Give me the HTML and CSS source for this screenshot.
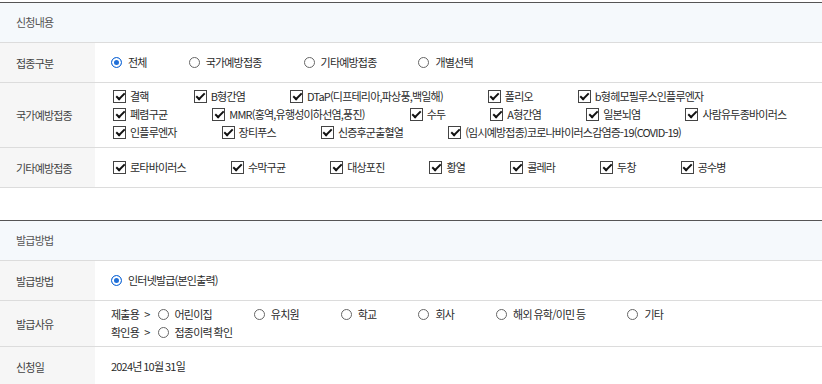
FILE: index.html
```html
<!DOCTYPE html>
<html lang="ko">
<head>
  <meta charset="UTF-8">
  <meta name="viewport" content="width=device-width, initial-scale=1.0">
  <title>예방접종증명서 신청</title>
  <link rel="stylesheet" href="styles.css">
</head>
<body>
  <div class="form-section">
    <div class="section-head">신청내용</div>
    <div class="form-row">
      <div class="row-label">접종구분</div>
      <div class="row-field">
        <div class="opt-line">
          <label class="opt"><span class="radio on"></span>전체</label>
          <label class="opt"><span class="radio"></span>국가예방접종</label>
          <label class="opt"><span class="radio"></span>기타예방접종</label>
          <label class="opt"><span class="radio"></span>개별선택</label>
        </div>
      </div>
    </div>
    <div class="form-row">
      <div class="row-label">국가예방접종</div>
      <div class="row-field tall">
        <div class="opt-line">
          <label class="opt check"><span class="chk"></span>결핵</label>
          <label class="opt check"><span class="chk"></span>B형간염</label>
          <label class="opt check"><span class="chk"></span>DTaP(디프테리아,파상풍,백일해)</label>
          <label class="opt check"><span class="chk"></span>폴리오</label>
          <label class="opt check"><span class="chk"></span>b형헤모필루스인플루엔자</label>
        </div>
        <div class="opt-line">
          <label class="opt check"><span class="chk"></span>폐렴구균</label>
          <label class="opt check"><span class="chk"></span>MMR(홍역,유행성이하선염,풍진)</label>
          <label class="opt check"><span class="chk"></span>수두</label>
          <label class="opt check"><span class="chk"></span>A형간염</label>
          <label class="opt check"><span class="chk"></span>일본뇌염</label>
          <label class="opt check"><span class="chk"></span>사람유두종바이러스</label>
        </div>
        <div class="opt-line">
          <label class="opt check"><span class="chk"></span>인플루엔자</label>
          <label class="opt check"><span class="chk"></span>장티푸스</label>
          <label class="opt check"><span class="chk"></span>신증후군출혈열</label>
          <label class="opt check"><span class="chk"></span>(임시예방접종)코로나바이러스감염증-19(COVID-19)</label>
        </div>
      </div>
    </div>
    <div class="form-row">
      <div class="row-label">기타예방접종</div>
      <div class="row-field">
        <div class="opt-line">
          <label class="opt check"><span class="chk"></span>로타바이러스</label>
          <label class="opt check"><span class="chk"></span>수막구균</label>
          <label class="opt check"><span class="chk"></span>대상포진</label>
          <label class="opt check"><span class="chk"></span>황열</label>
          <label class="opt check"><span class="chk"></span>콜레라</label>
          <label class="opt check"><span class="chk"></span>두창</label>
          <label class="opt check"><span class="chk"></span>공수병</label>
        </div>
      </div>
    </div>
  </div>

  <div class="form-section">
    <div class="section-head">발급방법</div>
    <div class="form-row">
      <div class="row-label">발급방법</div>
      <div class="row-field">
        <div class="opt-line">
          <label class="opt"><span class="radio on"></span>인터넷발급(본인출력)</label>
        </div>
      </div>
    </div>
    <div class="form-row">
      <div class="row-label">발급사유</div>
      <div class="row-field">
        <div class="opt-line">
          <span class="prefix">제출용 &gt;</span>
          <label class="opt"><span class="radio"></span>어린이집</label>
          <label class="opt"><span class="radio"></span>유치원</label>
          <label class="opt"><span class="radio"></span>학교</label>
          <label class="opt"><span class="radio"></span>회사</label>
          <label class="opt"><span class="radio"></span>해외 유학/이민 등</label>
          <label class="opt"><span class="radio"></span>기타</label>
        </div>
        <div class="opt-line">
          <span class="prefix">확인용 &gt;</span>
          <label class="opt"><span class="radio"></span>접종이력 확인</label>
        </div>
      </div>
    </div>
    <div class="form-row">
      <div class="row-label">신청일</div>
      <div class="row-field">
        <div class="opt-line">2024년 10월 31일</div>
      </div>
    </div>
  </div>
</body>
</html>
```

FILE: styles.css
```css
body {
    margin: 0;
    padding-top: 2px;
    font-family: "Noto Sans CJK KR", "Noto Sans", sans-serif;
    font-size: 11px;
    letter-spacing: -0.8px;
    word-spacing: -0.5px;
    color: #333;
    background-color: #fff;
}
.form-section {
    border-top: 1px solid #555;
}
.form-section + .form-section {
    margin-top: 32px;
}
.section-head {
    height: 39px;
    line-height: 39px;
    padding-left: 16px;
    background-color: #f5f9fc;
    border-bottom: 1px solid #dcdcdc;
    color: #555;
}
.form-row {
    display: grid;
    grid-template-columns: 95px 1fr;
    min-height: 39px;
    border-bottom: 1px solid #dcdcdc;
}
.row-label {
    display: flex;
    align-items: center;
    padding-left: 16px;
    background-color: #f6f6f6;
    color: #444;
}
.row-field {
    display: flex;
    flex-direction: column;
    justify-content: center;
    padding: 4px 0 5px 16px;
    color: #2b2b2b;
}
.row-field.tall {
    padding-bottom: 6px;
}
.opt-line {
    display: flex;
    align-items: center;
    height: 18px;
    white-space: nowrap;
}
.opt {
    display: flex;
    align-items: center;
    margin-right: 42px;
}
.opt.check {
    margin-right: 43px;
}
.prefix {
    margin-right: 8px;
    word-spacing: 3px;
}
.radio {
    box-sizing: border-box;
    width: 11px;
    height: 11px;
    margin-right: 6px;
    border: 1px solid #666;
    border-radius: 50%;
    background-color: #fff;
}
.radio.on {
    border-color: #1f6fd8;
    background-color: #1f6fd8;
    box-shadow: inset 0 0 0 2px #fff;
}
.chk {
    position: relative;
    box-sizing: border-box;
    width: 13px;
    height: 13px;
    margin: 0 4px 0 2px;
    border: 1px solid #444;
    background-color: #fff;
}
.chk::after {
    content: '';
    position: absolute;
    left: 3.5px;
    top: 0.5px;
    width: 3px;
    height: 7px;
    border: solid #111;
    border-width: 0 2px 2px 0;
    transform: rotate(45deg);
}
```
